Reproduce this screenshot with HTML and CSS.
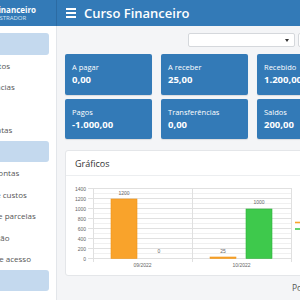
FILE: index.html
```html
<!DOCTYPE html>
<html lang="pt-br">
<head>
  <meta charset="UTF-8">
  <title>Curso Financeiro</title>
  <link rel="stylesheet" href="styles.css">
</head>
<body>

<div class="app">

  <aside class="sidebar">
    <div class="brand">
      <div class="brand-nome">Curso Financeiro</div>
      <div class="brand-perfil">ADMINISTRADOR</div>
    </div>
    <ul class="menu">
      <li class="grupo">Painel</li>
      <li>Lançamentos</li>
      <li>Transferências</li>
      <li>Extrato</li>
      <li>Outras contas</li>
      <li class="grupo">Gestão</li>
      <li>Plano de contas</li>
      <li>Centros de custos</li>
      <li>Geração de parcelas</li>
      <li>Configuração</li>
      <li>Controle de acesso</li>
      <li class="grupo">Sistema</li>
    </ul>
  </aside>

  <main class="principal">
    <header class="topo">
      <span class="menu-btn"><i></i><i></i><i></i></span>
      <span class="titulo">Curso Financeiro</span>
    </header>

    <div class="conteudo">
      <div class="filtros">
        <div class="seletor"><span class="seta"></span></div>
        <div class="botao"></div>
      </div>

      <div class="cards">
        <div class="card"><span class="rotulo">A pagar</span><span class="valor">0,00</span></div>
        <div class="card"><span class="rotulo">A receber</span><span class="valor">25,00</span></div>
        <div class="card"><span class="rotulo">Recebido</span><span class="valor">1.200,00</span></div>
        <div class="card"><span class="rotulo">Pagos</span><span class="valor">-1.000,00</span></div>
        <div class="card"><span class="rotulo">Transferências</span><span class="valor">0,00</span></div>
        <div class="card"><span class="rotulo">Saldos</span><span class="valor">200,00</span></div>
      </div>

      <div class="painel">
        <div class="painel-topo">Gráficos</div>
        <div class="painel-corpo">
          <svg class="grafico" width="240" height="99" viewBox="66 176 240 99">
            <!-- linhas menores -->
            <g stroke="#f0f0f0" stroke-width="1">
              <line x1="93" y1="253.5" x2="291" y2="253.5"/>
              <line x1="93" y1="243.5" x2="291" y2="243.5"/>
              <line x1="93" y1="233.5" x2="291" y2="233.5"/>
              <line x1="93" y1="223.5" x2="291" y2="223.5"/>
              <line x1="93" y1="213.5" x2="291" y2="213.5"/>
              <line x1="93" y1="203.5" x2="291" y2="203.5"/>
              <line x1="93" y1="193.5" x2="291" y2="193.5"/>
            </g>
            <!-- linhas principais -->
            <g stroke="#e0e0e0" stroke-width="1">
              <line x1="88" y1="248.5" x2="291" y2="248.5"/>
              <line x1="88" y1="238.5" x2="291" y2="238.5"/>
              <line x1="88" y1="228.5" x2="291" y2="228.5"/>
              <line x1="88" y1="218.5" x2="291" y2="218.5"/>
              <line x1="88" y1="208.5" x2="291" y2="208.5"/>
              <line x1="88" y1="198.5" x2="291" y2="198.5"/>
              <line x1="88" y1="188.5" x2="291" y2="188.5"/>
              <line x1="88" y1="258.5" x2="291" y2="258.5"/>
              <line x1="93.5" y1="188" x2="93.5" y2="262"/>
              <line x1="192.5" y1="188" x2="192.5" y2="262"/>
              <line x1="291.5" y1="188" x2="291.5" y2="262"/>
            </g>
            <g class="eixo" text-anchor="end">
              <text x="86" y="190.5">1400</text>
              <text x="86" y="200.5">1200</text>
              <text x="86" y="210.5">1000</text>
              <text x="86" y="220.5">800</text>
              <text x="86" y="230.5">600</text>
              <text x="86" y="240.5">400</text>
              <text x="86" y="250.5">200</text>
              <text x="86" y="260.5">0</text>
            </g>
            <rect x="111" y="199" width="26" height="59.5" fill="#f9a32b" stroke="#ee9418" stroke-width="0.6"/>
            <rect x="210" y="257" width="26" height="1.5" fill="#f9a32b" stroke="#ee9418" stroke-width="0.6"/>
            <rect x="246" y="209" width="26" height="49.5" fill="#3ec94c" stroke="#2fb33c" stroke-width="0.6"/>
            <g class="eixo" text-anchor="middle">
              <text x="124" y="194.5">1200</text>
              <text x="159" y="253">0</text>
              <text x="223" y="253">25</text>
              <text x="259" y="204">1000</text>
              <text x="142.5" y="267">09/2022</text>
              <text x="241.5" y="267">10/2022</text>
            </g>
            <line x1="295" y1="222.5" x2="306" y2="222.5" stroke="#f9a32b" stroke-width="1.6"/>
            <line x1="295" y1="229" x2="306" y2="229" stroke="#3ec94c" stroke-width="1.6"/>
          </svg>
        </div>
      </div>

      <footer class="rodape">Powered by Curso Financeiro</footer>
    </div>
  </main>

</div>

</body>
</html>
```
FILE: styles.css
```css
html, body {
  margin: 0;
  overflow: hidden;
}

body {
  font-family: "Open Sans", "Liberation Sans", sans-serif;
  background: #f4f5f7;
  color: #555;
}

.app {
  display: flex;
  width: 520px;
  min-height: 300px;
}

/* menu lateral */
.sidebar {
  flex: 0 0 200px;
  margin-left: -143px;
  background: #fff;
  border-right: 1px solid #e3e6ea;
  box-sizing: border-box;
}

.brand {
  height: 26px;
  background: #337ab7;
  border-right: 1px solid #2c6ba3;
  margin-right: -1px;
  padding-left: 112px;
  color: #fff;
  display: flex;
  flex-direction: column;
  justify-content: center;
}

.brand-nome {
  font-size: 8px;
  font-weight: 700;
  line-height: 10px;
}

.brand-perfil {
  font-size: 6px;
  line-height: 7px;
  color: #d6e4f2;
  padding-left: 9px;
}

.menu {
  list-style: none;
  margin: 7px 0 0;
  padding: 0;
}

.menu li {
  height: 21.5px;
  display: flex;
  align-items: center;
  padding-left: 103px;
  font-size: 8px;
}

.menu .grupo {
  background: #c4d9ee;
  margin-right: 7px;
  border-radius: 0 3px 3px 0;
  color: #c4d9ee;
}

/* barra do topo */
.principal {
  flex: 1;
}

.topo {
  height: 26px;
  background: #337ab7;
  display: flex;
  align-items: center;
  padding-left: 9px;
  color: #fff;
}

.menu-btn {
  display: flex;
  flex-direction: column;
  gap: 2px;
  width: 10px;
  margin-right: 8px;
}

.menu-btn i {
  display: block;
  height: 2px;
  background: #fff;
}

.titulo {
  font-size: 13px;
  font-weight: 600;
}

.conteudo {
  padding: 7px 0 0 8px;
}

.filtros {
  display: flex;
  gap: 3px;
  padding-left: 123px;
  margin-bottom: 7px;
}

.seletor {
  width: 105px;
  height: 12px;
  background: #fff;
  border: 1px solid #d5d8dc;
  border-radius: 2px;
  position: relative;
}

.seta {
  position: absolute;
  right: 5px;
  top: 5px;
  border-left: 2px solid transparent;
  border-right: 2px solid transparent;
  border-top: 3px solid #333;
}

.botao {
  width: 20px;
  height: 12px;
  background: #fff;
  border: 1px solid #d5d8dc;
  border-radius: 2px;
}

/* cards */
.cards {
  display: grid;
  grid-template-columns: repeat(4, 87px);
  grid-auto-rows: 40.5px;
  column-gap: 9px;
  row-gap: 4px;
  margin-bottom: 11px;
}

.card {
  background: #337ab7;
  border-radius: 2px;
  color: #fff;
  padding: 8px 7px 0;
  display: flex;
  flex-direction: column;
  gap: 2px;
  box-shadow: 0 1px 1px rgba(0, 0, 0, 0.1);
}

.card:nth-child(4) {
  grid-column: 1;
}

.rotulo {
  font-size: 7.5px;
  line-height: 10px;
}

.valor {
  font-size: 9.5px;
  font-weight: 700;
  line-height: 12px;
}

/* painel dos gráficos */
.painel {
  width: 360px;
  background: #fff;
  border: 1px solid #e4e6e9;
  border-radius: 3px;
}

.painel-topo {
  height: 24px;
  display: flex;
  align-items: center;
  padding-left: 9px;
  font-size: 9px;
  color: #333;
  border-bottom: 1px solid #eceef0;
}

.painel-corpo {
  height: 99px;
}

.grafico {
  display: block;
}

.eixo text {
  font-family: "Liberation Sans", sans-serif;
  font-size: 5px;
  fill: #666;
}

.rodape {
  padding: 6px 0 0 227px;
  font-size: 8.5px;
  color: #555;
}
```
